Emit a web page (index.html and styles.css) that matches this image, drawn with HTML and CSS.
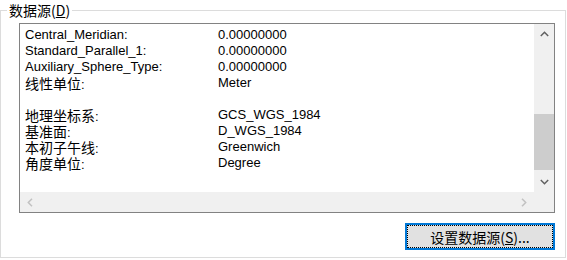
FILE: index.html
```html
<!DOCTYPE html>
<html lang="zh-CN">
<head>
    <meta charset="UTF-8">
    <title>数据源</title>

    <link rel="stylesheet" href="styles.css">

</head>
<body>

<fieldset class="group">
    <legend class="group-title">数据源(<u>D</u>)</legend>

    <div class="listbox">
        <div class="list-body">
            <div class="row"><span class="key">Central_Meridian:</span><span class="val">0.00000000</span></div>
            <div class="row"><span class="key">Standard_Parallel_1:</span><span class="val">0.00000000</span></div>
            <div class="row"><span class="key">Auxiliary_Sphere_Type:</span><span class="val">0.00000000</span></div>
            <div class="row"><span class="key"><span class="zh">线性单位</span>:</span><span class="val">Meter</span></div>
            <div class="row"></div>
            <div class="row"><span class="key"><span class="zh">地理坐标系</span>:</span><span class="val">GCS_WGS_1984</span></div>
            <div class="row"><span class="key"><span class="zh">基准面</span>:</span><span class="val">D_WGS_1984</span></div>
            <div class="row"><span class="key"><span class="zh">本初子午线</span>:</span><span class="val">Greenwich</span></div>
            <div class="row"><span class="key"><span class="zh">角度单位</span>:</span><span class="val">Degree</span></div>
        </div>

        <div class="vscroll">
            <div class="arrow">
                <svg width="9" height="6" viewBox="0 0 9 6"><polyline points="0.8,5 4.5,1.3 8.2,5" fill="none" stroke="#606060" stroke-width="1.5"/></svg>
            </div>
            <div class="track"><div class="thumb"></div></div>
            <div class="arrow">
                <svg width="9" height="6" viewBox="0 0 9 6"><polyline points="0.8,1 4.5,4.7 8.2,1" fill="none" stroke="#606060" stroke-width="1.5"/></svg>
            </div>
        </div>

        <div class="hscroll">
            <div class="arrow">
                <svg width="6" height="9" viewBox="0 0 6 9"><polyline points="5,0.8 1.3,4.5 5,8.2" fill="none" stroke="#c2c2c2" stroke-width="1.5"/></svg>
            </div>
            <div class="arrow">
                <svg width="6" height="9" viewBox="0 0 6 9"><polyline points="1,0.8 4.7,4.5 1,8.2" fill="none" stroke="#c2c2c2" stroke-width="1.5"/></svg>
            </div>
        </div>

        <div class="corner"></div>
    </div>

    <div class="actions">
        <button class="btn">设置数据源(<u>S</u>)...</button>
    </div>
</fieldset>

</body>
</html>
```

FILE: styles.css
```css
body {
    margin: 0;
    background: #ffffff;
    color: #000000;
    font-family: "Liberation Sans", "Noto Sans CJK SC", sans-serif;
    font-size: 13px;
}

.group {
    box-sizing: border-box;
    width: 566px;
    height: 258px;
    margin: 0;
    min-width: 0;
    padding: 3px 10px 0 6px;
    border: 1px solid #dcdcdc;
}

.group-title {
    padding: 0 2px;
    font-family: "Noto Sans CJK SC", sans-serif;
    font-size: 14px;
    line-height: 20px;
}

.listbox {
    box-sizing: border-box;
    margin-left: 12px;
    width: 536px;
    height: 190px;
    border: 1px solid #828282;
    display: grid;
    grid-template-columns: 1fr 20px;
    grid-template-rows: 1fr 20px;
}

.list-body {
    padding: 3px 0 0 5px;
    overflow: hidden;
}

.row {
    display: grid;
    grid-template-columns: 193px 1fr;
    height: 16px;
    line-height: 16px;
    white-space: nowrap;
}

.zh {
    font-family: "Noto Sans CJK SC", sans-serif;
    font-size: 14px;
    line-height: 16px;
}

.vscroll {
    background: #f0f0f0;
    display: grid;
    grid-template-rows: 20px 1fr 20px;
}

.hscroll {
    background: #f0f0f0;
    display: flex;
    justify-content: space-between;
}

.corner {
    background: #f0f0f0;
}

.arrow {
    width: 20px;
    height: 20px;
    display: flex;
    align-items: center;
    justify-content: center;
}

.thumb {
    margin-top: 70px;
    height: 56px;
    background: #cdcdcd;
}

.actions {
    display: flex;
    justify-content: flex-end;
    width: 548px;
    margin-top: 10px;
}

.btn {
    box-sizing: border-box;
    width: 150px;
    height: 27px;
    padding: 0;
    background: #e1e1e1;
    border: 2px solid #0078d7;
    outline: 1px dotted #000000;
    outline-offset: -3px;
    font-family: "Noto Sans CJK SC", sans-serif;
    font-size: 14px;
    line-height: 20px;
    color: #000000;
}
```
